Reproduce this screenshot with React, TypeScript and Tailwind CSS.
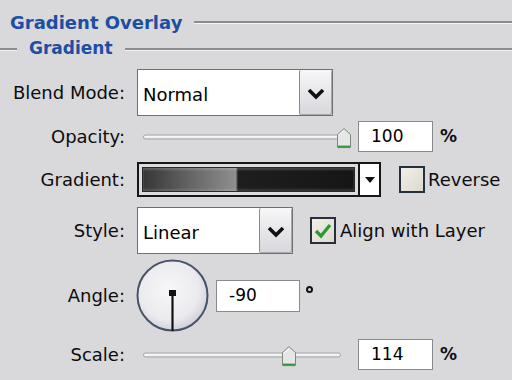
import React from 'react'

const font = { fontFamily: '"DejaVu Sans", Verdana, sans-serif' }

function Chevron() {
  return (
    <svg width="18" height="12" viewBox="0 0 18 12">
      <path d="M2 2 L9 9 L16 2" fill="none" stroke="#111" strokeWidth="3.6" strokeLinejoin="miter" />
    </svg>
  )
}

function Select({ value, width }: { value: string; width: string }) {
  return (
    <div className={`flex h-full ${width} border border-[#6f6f72] bg-white`}>
      <div className="flex flex-1 items-center pl-[5px] pt-[3px] text-[18px] text-black">{value}</div>
      <div className="flex w-[33px] items-center justify-center rounded-[2px] border-l border-[#8a8a8e] bg-[linear-gradient(to_bottom,#f7f7f8,#d7d7dc)] pt-[2px] shadow-[inset_-1px_-1px_0_#a8a8ae]">
        <Chevron />
      </div>
    </div>
  )
}

function Thumb() {
  return (
    <svg width="16" height="22" viewBox="0 0 16 22">
      <path d="M1.5 7.5 L8 1.5 L14.5 7.5 L14.5 20.5 L1.5 20.5 Z" fill="#e6e6e8" stroke="#7c8a7c" strokeWidth="1" />
      <path d="M2 19.5 L14 19.5" stroke="#2f9a3c" strokeWidth="2" />
      <path d="M3 8 L8 3.5" stroke="#ffffff" strokeWidth="1" />
    </svg>
  )
}

function Slider({ trackWidth, thumbLeft }: { trackWidth: string; thumbLeft: number }) {
  return (
    <div className="relative h-full w-[210px]">
      <div className={`absolute left-0 top-1/2 h-[5px] ${trackWidth} -translate-y-1/2 rounded-full border border-[#a4a4a8] bg-[linear-gradient(to_bottom,#ffffff,#e8e8ea)]`} />
      <div className="absolute top-1/2 -translate-y-[45%]" style={{ left: thumbLeft }}>
        <Thumb />
      </div>
    </div>
  )
}

function NumberBox({ value, width = 'w-[75px]' }: { value: string; width?: string }) {
  return (
    <div className={`flex h-full ${width} items-center border border-[#8a8a8e] bg-white pl-[12px] text-[17px] text-black`}>
      {value}
    </div>
  )
}

function Checkbox({ checked }: { checked?: boolean }) {
  return (
    <div className="flex h-[27px] w-[26px] items-center justify-center border-2 border-[#26303c] bg-[linear-gradient(135deg,#f2efe8,#ddd9cf)]">
      {checked && (
        <svg width="18" height="16" viewBox="0 0 18 16">
          <path d="M2 8 L7 13 L16 2" fill="none" stroke="#2a9a30" strokeWidth="3.2" />
        </svg>
      )}
    </div>
  )
}

function Label({ text }: { text: string }) {
  return <div className="w-[126px] shrink-0 pr-[1px] text-right text-[18px] text-[#0c0c0c]">{text}</div>
}

function Rule() {
  return (
    <div className="flex-1">
      <div className="h-[2px] bg-[#8c8c90]" />
      <div className="h-[1px] bg-[#f4f4f6]" />
    </div>
  )
}

export default function App() {
  return (
    <div className="h-[380px] w-[512px] overflow-hidden bg-[#d9d8db]" style={font}>
      <div className="mt-[8px] flex h-[28px] items-center">
        <div className="pl-[10px] pr-[12px] text-[18px] font-bold text-[#1c4fa3]">Gradient Overlay</div>
        <Rule />
      </div>
      <div className="flex h-[26px] items-center">
        <div className="w-[17px]">
          <div className="h-[2px] bg-[#8c8c90]" />
          <div className="h-[1px] bg-[#f4f4f6]" />
        </div>
        <div className="px-[12px] text-[17px] font-bold text-[#1c4fa3]">Gradient</div>
        <Rule />
      </div>

      <div className="mt-[7px] flex h-[47px] items-center">
        <Label text="Blend Mode:" />
        <div className="ml-[11px] h-full">
          <Select value="Normal" width="w-[196px]" />
        </div>
      </div>

      <div className="mt-[5px] flex h-[31px] items-center">
        <Label text="Opacity:" />
        <div className="ml-[17px] h-full">
          <Slider trackWidth="w-[200px]" thumbLeft={193} />
        </div>
        <div className="ml-[5px] h-full">
          <NumberBox value="100" />
        </div>
        <div className="ml-[7px] text-[17px] font-bold text-[#111]">%</div>
      </div>

      <div className="mt-[10px] flex h-[35px] items-center">
        <Label text="Gradient:" />
        <div className="ml-[11px] flex h-full w-[244px] border-2 border-[#161616] bg-[#dcdcde]">
          <div className="flex-1 p-[3px]">
            <div className="h-full border border-[#2a2a2a] bg-[linear-gradient(to_right,#363636_0%,#6a6a6a_25%,#8e8e8e_44%,#1e1e1e_45%,#161616_100%)] shadow-[inset_0_2px_2px_rgba(255,255,255,0.18),inset_0_-2px_2px_rgba(255,255,255,0.12)]" />
          </div>
          <div className="flex w-[21px] items-center justify-center border-l-2 border-[#161616] bg-white">
            <svg width="10" height="6" viewBox="0 0 10 6">
              <path d="M0 0 L10 0 L5 6 Z" fill="#111" />
            </svg>
          </div>
        </div>
        <div className="ml-[18px]">
          <Checkbox />
        </div>
        <div className="ml-[3px] text-[18px] text-[#0c0c0c]">Reverse</div>
      </div>

      <div className="mt-[10px] flex h-[47px] items-center">
        <Label text="Style:" />
        <div className="ml-[11px] h-full">
          <Select value="Linear" width="w-[156px]" />
        </div>
        <div className="ml-[17px]">
          <Checkbox checked />
        </div>
        <div className="ml-[4px] text-[18px] text-[#0c0c0c]">Align with Layer</div>
      </div>

      <div className="mt-[5px] flex h-[73px] items-center">
        <Label text="Angle:" />
        <div className="ml-[10px]">
          <svg width="73" height="73" viewBox="0 0 73 73">
            <defs>
              <radialGradient id="dial" cx="0.45" cy="0.42" r="0.6">
                <stop offset="0" stopColor="#f7f7f9" />
                <stop offset="0.7" stopColor="#ebebef" />
                <stop offset="1" stopColor="#cfd0d8" />
              </radialGradient>
            </defs>
            <circle cx="36.5" cy="36.5" r="35" fill="url(#dial)" stroke="#48536a" strokeWidth="2" />
            <line x1="36.5" y1="34" x2="36.5" y2="72" stroke="#111" strokeWidth="2.2" />
            <rect x="33" y="31" width="7" height="6" fill="#111" />
          </svg>
        </div>
        <div className="ml-[7px] h-[32px]">
          <NumberBox value="-90" width="w-[84px]" />
        </div>
        <div className="mb-[12px] ml-[6px] h-[7px] w-[7px] rounded-full border-2 border-[#111]" />
      </div>

      <div className="mt-[7px] flex h-[31px] items-center">
        <Label text="Scale:" />
        <div className="ml-[17px] h-full">
          <Slider trackWidth="w-[198px]" thumbLeft={138} />
        </div>
        <div className="ml-[5px] h-full">
          <NumberBox value="114" />
        </div>
        <div className="ml-[7px] text-[17px] font-bold text-[#111]">%</div>
      </div>
    </div>
  )
}
